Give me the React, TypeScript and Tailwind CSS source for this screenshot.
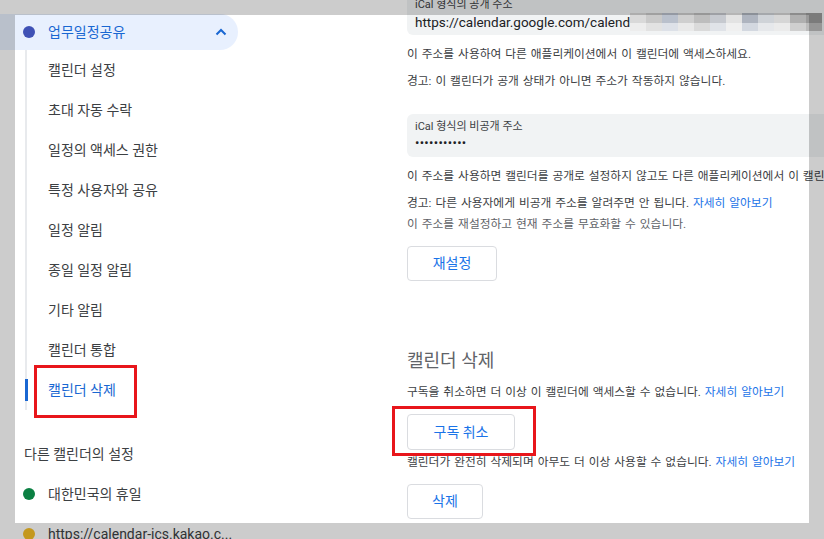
import React from 'react';

const FONT = { fontFamily: 'Roboto, "Noto Sans CJK KR", sans-serif' };

const subItems = [
  '캘린더 설정',
  '초대 자동 수락',
  '일정의 액세스 권한',
  '특정 사용자와 공유',
  '일정 알림',
  '종일 일정 알림',
  '기타 알림',
  '캘린더 통합',
  '캘린더 삭제',
];

const blurTop = ['#d9d9d9', '#c9c9c9', '#b9c0cc', '#cfcfcf', '#bdbdbd', '#c6c9cf', '#e3e3e3', '#aeb4bf', '#cfd3d8', '#d6d6d6', '#b0b0b0', '#9a9a9a'];
const blurBottom = ['#ededed', '#e2e2e2', '#dde1e8', '#e9e9e9', '#dadada', '#e0e3e8', '#f0f0f0', '#d3d8e0', '#e6e8eb', '#ebebeb', '#cfcfcf', '#bcbcbc'];

function Sidebar() {
  return (
    <div className="w-[250px] shrink-0 flex flex-col">
      {/* Calendar header pill */}
      <div className="mt-[14px] h-9 w-[238px] rounded-r-full bg-[#e8f0fe] flex items-center">
        <div className="ml-[23px] w-3 h-3 rounded-full bg-[#3f51b5]" />
        <span className="ml-[13px] text-[14px] text-[#1967d2]">업무일정공유</span>
        <svg className="ml-auto mr-[11px] w-[12px] h-[8px]" viewBox="0 0 12 8">
          <path d="M1.5 6.5 L6 2 L10.5 6.5" fill="none" stroke="#1967d2" strokeWidth="2" />
        </svg>
      </div>

      {/* Sub items */}
      <div className="ml-[25px] border-l-2 border-[#e8eaed] flex flex-col">
        {subItems.map((label, i) => {
          const active = i === subItems.length - 1;
          return (
            <div key={label} className="h-10 -ml-[2px] flex items-center">
              <div className={active ? 'w-[3px] h-[22px] bg-[#1967d2]' : 'w-[3px] h-[22px]'} />
              <span className={active ? 'ml-[20px] text-[14px] text-[#1967d2]' : 'ml-[20px] text-[14px] text-[#3c4043]'}>
                {label}
              </span>
            </div>
          );
        })}
      </div>

      <div className="mt-[24px] h-10 pl-[24px] flex items-center text-[14px] text-[#3c4043]">다른 캘린더의 설정</div>
      <div className="h-10 flex items-center">
        <div className="ml-[23px] w-3 h-3 rounded-full bg-[#0b8043]" />
        <span className="ml-[13px] text-[14px] text-[#3c4043]">대한민국의 휴일</span>
      </div>
      <div className="h-10 flex items-center">
        <div className="ml-[23px] w-3 h-3 rounded-full bg-[#f6bf26]" />
        <span className="ml-[13px] text-[14px] text-[#3c4043]">https://calendar-ics.kakao.c...</span>
      </div>
    </div>
  );
}

function OutlineButton({ label, w, h }: { label: string; w: string; h: string }) {
  return (
    <button className={`${w} ${h} border border-[#dadce0] rounded-[4px] bg-white text-[14px] text-[#1a73e8] flex items-center justify-center`}>
      {label}
    </button>
  );
}

function Content() {
  return (
    <div className="ml-[157px] -mt-[8px] flex-1 flex flex-col whitespace-nowrap text-[11.75px] [word-spacing:1px] text-[#3c4043]">
      {/* Public address */}
      <div className="h-[43px] w-[520px] rounded-l-[6px] bg-[#f1f3f4] pl-2 pt-[6px] flex flex-col">
        <div className="leading-[14px] text-[11px] [word-spacing:0px] text-[#3c4043]">iCal 형식의 공개 주소</div>
        <div className="mt-[1px] leading-[18px] flex items-center">
          <span className="text-[13.5px] [word-spacing:0px] text-[#202124]">https://calendar.google.com/calend</span>
          <div className="flex flex-col">
            <div className="flex">
              {blurTop.map((c, i) => (
                <div key={i} className="w-[16px] h-[10px]" style={{ backgroundColor: c }} />
              ))}
            </div>
            <div className="flex">
              {blurBottom.map((c, i) => (
                <div key={i} className="w-[16px] h-[8px]" style={{ backgroundColor: c }} />
              ))}
            </div>
          </div>
        </div>
      </div>
      <div className="mt-[10px] h-5 flex items-center">이 주소를 사용하여 다른 애플리케이션에서 이 캘린더에 액세스하세요.</div>
      <div className="mt-[7px] h-5 flex items-center">경고: 이 캘린더가 공개 상태가 아니면 주소가 작동하지 않습니다.</div>

      {/* Private address */}
      <div className="mt-[22px] h-[43px] w-[520px] rounded-l-[6px] bg-[#f1f3f4] pl-2 pt-[6px] flex flex-col">
        <div className="leading-[14px] text-[11px] [word-spacing:0px] text-[#3c4043]">iCal 형식의 비공개 주소</div>
        <div className="leading-[18px] text-[13px] text-[#202124] tracking-[0.3px]">•••••••••••</div>
      </div>
      <div className="mt-[10px] h-5 flex items-center">이 주소를 사용하면 캘린더를 공개로 설정하지 않고도 다른 애플리케이션에서 이 캘린더에 액세스할 수 있습니다.</div>
      <div className="mt-[7px] h-5 flex items-center">
        경고: 다른 사용자에게 비공개 주소를 알려주면 안 됩니다.&nbsp;<span className="text-[#1a73e8]">자세히 알아보기</span>
      </div>
      <div className="mt-[1px] h-5 flex items-center text-[#5f6368]">이 주소를 재설정하고 현재 주소를 무효화할 수 있습니다.</div>
      <div className="mt-[11px]">
        <OutlineButton label="재설정" w="w-[90px]" h="h-[35px]" />
      </div>

      {/* Delete calendar */}
      <div className="mt-[64px] h-[30px] flex items-center text-[18px] [word-spacing:0px] text-[#5f6368]">캘린더 삭제</div>
      <div className="mt-[8px] h-5 flex items-center">
        구독을 취소하면 더 이상 이 캘린더에 액세스할 수 없습니다.&nbsp;<span className="text-[#1a73e8]">자세히 알아보기</span>
      </div>
      <div className="mt-[11px]">
        <OutlineButton label="구독 취소" w="w-[108px]" h="h-[36px]" />
      </div>
      <div className="mt-[3px] h-5 flex items-center">
        캘린더가 완전히 삭제되며 아무도 더 이상 사용할 수 없습니다.&nbsp;<span className="text-[#1a73e8]">자세히 알아보기</span>
      </div>
      <div className="mt-[11px]">
        <OutlineButton label="삭제" w="w-[76px]" h="h-[35px]" />
      </div>
    </div>
  );
}

export default function App() {
  return (
    <div className="relative w-[824px] h-[539px] overflow-hidden bg-white" style={FONT}>
      <div className="flex">
        <Sidebar />
        <Content />
      </div>

      {/* Screenshot selection dimming */}
      <div className="absolute left-0 top-0 w-[824px] h-[15px] bg-black/20" />
      <div className="absolute left-0 top-[523px] w-[824px] h-[16px] bg-black/20" />
      <div className="absolute left-0 top-[15px] w-[15px] h-[508px] bg-black/20" />
      <div className="absolute left-[809px] top-[15px] w-[15px] h-[508px] bg-black/20" />

      {/* Red annotation boxes */}
      <div className="absolute left-[34px] top-[365px] w-[103px] h-[53px] border-[3px] border-[#e8161b]" />
      <div className="absolute left-[392px] top-[406px] w-[144px] h-[50px] border-[3px] border-[#e8161b]" />
    </div>
  );
}
